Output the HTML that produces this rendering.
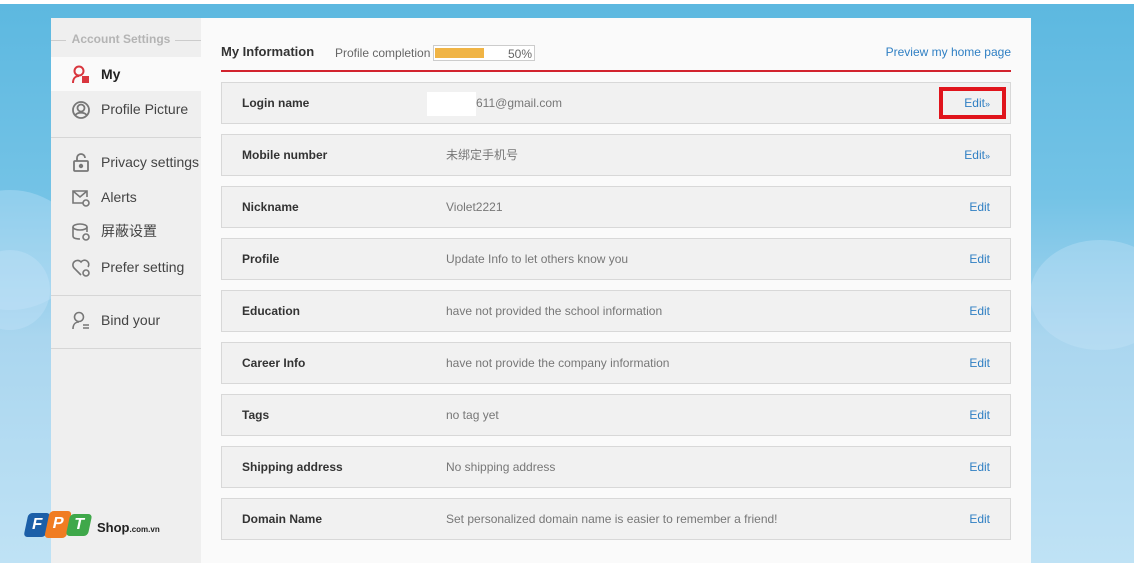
<!DOCTYPE html>
<html><head><meta charset="utf-8"><style>
*{margin:0;padding:0;box-sizing:border-box}
body{width:1134px;height:563px;overflow:hidden;position:relative;font-family:"Liberation Sans","Noto Sans CJK SC",sans-serif;background:linear-gradient(180deg,#5cb8e0 0%,#74c3e6 35%,#aad6ef 60%,#bfe2f5 100%)}
.topw{position:absolute;left:0;top:0;width:1134px;height:4px;background:#fff}
.cloud{position:absolute;border-radius:50%;background:rgba(200,230,248,.35)}
.side{position:absolute;left:51px;top:18px;width:150px;height:545px;background:#efefef}
.main{position:absolute;left:201px;top:18px;width:830px;height:545px;background:#fafafa}
.st{position:absolute;left:18px;top:14px;width:104px;text-align:center;font-size:12px;font-weight:bold;color:#b4b4b4;white-space:nowrap}
.st:before,.st:after{content:"";position:absolute;top:8px;height:1px;background:#ccc}
.st:before{left:-18px;width:15px}.st:after{right:-28px;width:26px}
.it{position:absolute;left:0;width:150px;height:34px;font-size:14px;color:#444;line-height:34px;padding-left:50px;white-space:nowrap}
.it svg{position:absolute;left:20px;top:8px}
.hr{position:absolute;left:0;width:150px;height:1px;background:#d6d6d6}
.row{position:absolute;left:20px;width:790px;height:42px;background:#f1f1f1;border:1px solid #d8d8d8;font-size:12px;line-height:40px}
.row b{position:absolute;left:20px;color:#333}
.row span{position:absolute;left:224px;color:#777}
.row a{position:absolute;right:20px;color:#2f7fc3;text-decoration:none}
</style></head><body>
<div class="topw"></div>
<div class="cloud" style="left:-60px;top:190px;width:140px;height:120px"></div>
<div class="cloud" style="left:-30px;top:250px;width:80px;height:80px"></div>
<div class="cloud" style="left:1030px;top:240px;width:140px;height:110px"></div>
<div class="side">
<div class="st">Account Settings</div>
<div class="it" style="top:39px;background:#fafafa;font-weight:bold;color:#222"><svg width="20" height="20" viewBox="0 0 20 20" fill="none" stroke="#d9363e" stroke-width="2"><circle cx="8" cy="6" r="4.5"/><path d="M2 18c0-4 2-7 6-7"/><rect x="11" y="11" width="7" height="7" fill="#d9363e" stroke="none"/></svg>My</div>
<div class="it" style="top:74px"><svg width="20" height="20" viewBox="0 0 20 20" fill="none" stroke="#777" stroke-width="1.8"><circle cx="10" cy="10" r="8"/><circle cx="10" cy="8" r="3.5"/><path d="M4.5 15c2-3 9-3 11 0"/></svg>Profile Picture</div>
<div class="hr" style="top:119px"></div>
<div class="it" style="top:127px"><svg width="20" height="20" viewBox="0 0 20 20" fill="none" stroke="#777" stroke-width="1.8"><path d="M6 8V5a4 4 0 0 1 8 0"/><rect x="3" y="8" width="14" height="10" rx="1"/><circle cx="10" cy="13" r="1.3" fill="#777"/></svg>Privacy settings</div>
<div class="it" style="top:162px"><svg width="20" height="20" viewBox="0 0 20 20" fill="none" stroke="#777" stroke-width="1.6"><path d="M12 15H2V3h14v6"/><path d="M2 3l7 6 7-6"/><circle cx="15" cy="15" r="3"/></svg>Alerts</div>
<div class="it" style="top:196px"><svg width="20" height="20" viewBox="0 0 20 20" fill="none" stroke="#777" stroke-width="1.6"><ellipse cx="9" cy="5" rx="7" ry="3"/><path d="M2 5v9c0 2 3 3 7 3M16 5v5"/><circle cx="15" cy="15" r="3"/></svg>屏蔽设置</div>
<div class="it" style="top:232px"><svg width="20" height="20" viewBox="0 0 20 20" fill="none" stroke="#777" stroke-width="1.6"><path d="M10 17L3 10a4 4 0 0 1 7-6 4 4 0 0 1 7 5"/><circle cx="15" cy="15" r="3"/></svg>Prefer setting</div>
<div class="hr" style="top:277px"></div>
<div class="it" style="top:285px"><svg width="20" height="20" viewBox="0 0 20 20" fill="none" stroke="#777" stroke-width="1.6"><circle cx="8" cy="6" r="4.5"/><path d="M2 18c0-4 2-7 6-7M12 14h6M12 17h6"/></svg>Bind your</div>
<div class="hr" style="top:330px"></div>
</div>
<div style="position:absolute;left:26px;top:511px;width:70px;height:28px">
<div style="position:absolute;left:0;top:2px;width:22px;height:24px;background:#1c5fa8;transform:skewX(-12deg);border-radius:4px;color:#fff;font:bold 16px 'Liberation Sans';text-align:center;line-height:24px">F</div>
<div style="position:absolute;left:21px;top:0;width:22px;height:27px;background:#f07c22;transform:skewX(-12deg);border-radius:4px;color:#fff;font:bold 16px 'Liberation Sans';text-align:center;line-height:26px">P</div>
<div style="position:absolute;left:42px;top:3px;width:22px;height:22px;background:#3fa84a;transform:skewX(-12deg);border-radius:4px;color:#fff;font:bold 16px 'Liberation Sans';text-align:center;line-height:22px">T</div>
</div>
<div style="position:absolute;left:97px;top:520px;font:bold 13px 'Liberation Sans';color:#222">Shop<span style="font-size:8px">.com.vn</span></div>
<div class="main">
<div style="position:absolute;left:20px;top:26px;font-size:13px;font-weight:bold;color:#333">My Information</div>
<div style="position:absolute;left:134px;top:28px;font-size:12px;color:#666">Profile completion</div>
<div style="position:absolute;left:232px;top:27px;width:102px;height:16px;border:1px solid #ccc;background:#fff"><div style="position:absolute;left:1px;top:2px;width:49px;height:10px;background:#f0b445"></div><span style="position:absolute;right:2px;top:1px;font-size:12px;color:#666">50%</span></div>
<div style="position:absolute;right:20px;top:27px;font-size:12px;color:#2f7fc3">Preview my home page</div>
<div style="position:absolute;left:20px;top:52px;width:790px;height:2px;background:#d2232e"></div>
<div class="row" style="top:64px"><b>Login name</b><span style="left:205px"><i style="display:inline-block;width:49px;height:24px;background:#fff;vertical-align:middle"></i>611@gmail.com</span><a>Edit<small style="font-size:9px">»</small></a><div style="position:absolute;right:4px;top:4px;width:67px;height:32px;border:4px solid #e0141c"></div></div>
<div class="row" style="top:116px"><b>Mobile number</b><span>未绑定手机号</span><a>Edit<small style="font-size:9px">»</small></a></div>
<div class="row" style="top:168px"><b>Nickname</b><span>Violet2221</span><a>Edit</a></div>
<div class="row" style="top:220px"><b>Profile</b><span>Update Info to let others know you</span><a>Edit</a></div>
<div class="row" style="top:272px"><b>Education</b><span>have not provided the school information</span><a>Edit</a></div>
<div class="row" style="top:324px"><b>Career Info</b><span>have not provide the company information</span><a>Edit</a></div>
<div class="row" style="top:376px"><b>Tags</b><span>no tag yet</span><a>Edit</a></div>
<div class="row" style="top:428px"><b>Shipping address</b><span>No shipping address</span><a>Edit</a></div>
<div class="row" style="top:480px"><b>Domain Name</b><span>Set personalized domain name is easier to remember a friend!</span><a>Edit</a></div>
</div>
</body></html>
